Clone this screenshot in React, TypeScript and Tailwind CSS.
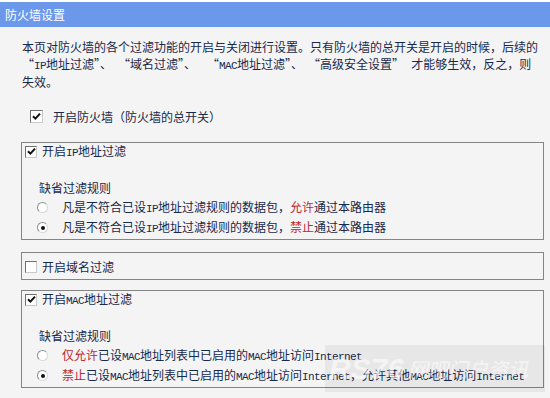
import React from 'react';

const cjk = "font-['SimSun','Noto_Sans_CJK_SC',sans-serif]";

// half-width latin runs, like the router's bitmap font
function En({ children }: { children: React.ReactNode }) {
  return <span className="font-['Liberation_Mono',monospace] text-[11px] tracking-[-0.6px]">{children}</span>;
}

function Red({ children }: { children: React.ReactNode }) {
  return <span className="text-[#c1272d]">{children}</span>;
}

function CheckBox({ checked, size = 'sm' }: { checked?: boolean; size?: 'sm' | 'md' }) {
  return (
    <span
      className={`inline-flex items-center justify-center shrink-0 bg-white border border-[#6f6f6f] border-r-[#c9c9c9] border-b-[#c9c9c9] ${
        size === 'md' ? 'w-[13px] h-[13px]' : 'w-[12px] h-[12px]'
      }`}
    >
      {checked && (
        <svg width="9" height="9" viewBox="0 0 9 9">
          <path d="M1 4.2 L3.4 6.6 L8 1.6" stroke="#111" strokeWidth="2" fill="none" />
        </svg>
      )}
    </span>
  );
}

function Radio({ checked }: { checked?: boolean }) {
  return (
    <span className="inline-flex items-center justify-center w-[11px] h-[11px] rounded-full bg-white border border-[#8d8d8d] border-r-[#d8d8d8] border-b-[#d8d8d8] shrink-0">
      {checked && <span className="w-[4px] h-[4px] rounded-full bg-[#111]" />}
    </span>
  );
}

function FilterBox({
  label,
  checked,
  rules,
}: {
  label: React.ReactNode;
  checked?: boolean;
  rules?: { text: React.ReactNode; on?: boolean }[];
}) {
  return (
    <div className={`w-[523px] border border-[#858585] ${rules ? 'pb-[1px]' : 'pt-[5px] pb-[2px]'}`}>
      <div className="h-[20px] flex items-center pl-[3px] gap-[5px] -mt-[1px]">
        <CheckBox checked={checked} />
        <span>{label}</span>
      </div>
      {rules && (
        <>
          <div className="h-[20px] mt-[16px] flex items-center pl-[17px]">缺省过滤规则</div>
          {rules.map((r, i) => (
            <div key={i} className="h-[20px] flex items-center pl-[15px] gap-[14px]">
              <Radio checked={r.on} />
              <span className="whitespace-nowrap">{r.text}</span>
            </div>
          ))}
        </>
      )}
    </div>
  );
}

export default function App() {
  return (
    <div lang="zh-CN" className={`relative w-[550px] h-[398px] overflow-hidden bg-[#f4f4f4] text-[12px] text-[#18294a] ${cjk}`}>
      <div className="h-[2px] bg-white" />
      {/* title bar */}
      <div className="h-[25px] bg-[#6b98eb] text-white flex items-center pl-[5px] text-[12px]">防火墙设置</div>

      <div className="pl-[21px]">
        <p className="pt-[12px] pl-[1px] leading-[16.5px] whitespace-nowrap">
          本页对防火墙的各个过滤功能的开启与关闭进行设置。只有防火墙的总开关是开启的时候，后续的
          <br />
          “<En>IP</En>地址过滤”、<span className="inline-block w-[6px]" />“域名过滤”、<span className="inline-block w-[11px]" />“<En>MAC</En>地址过滤”、<span className="inline-block w-[5px]" />“高级安全设置”<span className="inline-block w-[7px]" />才能够生效，反之，则
          <br />
          失效。
        </p>

        <div className="h-[20px] mt-[16px] flex items-center pl-[9px] gap-[10px]">
          <CheckBox checked size="md" />
          <span>开启防火墙（防火墙的总开关）</span>
        </div>

        <div className="mt-[15px]">
          <FilterBox
            checked
            label={<>开启<En>IP</En>地址过滤</>}
            rules={[
              { text: <>凡是不符合已设<En>IP</En>地址过滤规则的数据包，<Red>允许</Red>通过本路由器</> },
              { text: <>凡是不符合已设<En>IP</En>地址过滤规则的数据包，<Red>禁止</Red>通过本路由器</>, on: true },
            ]}
          />
        </div>

        <div className="mt-[12px]">
          <FilterBox label="开启域名过滤" />
        </div>

        <div className="mt-[10px]">
          <FilterBox
            checked
            label={<>开启<En>MAC</En>地址过滤</>}
            rules={[
              { text: <><Red>仅允许</Red>已设<En>MAC</En>地址列表中已启用的<En>MAC</En>地址访问<En>Internet</En></> },
              {
                text: <><Red>禁止</Red>已设<En>MAC</En>地址列表中已启用的<En>MAC</En>地址访问<En>Internet</En>，允许其他<En>MAC</En>地址访问<En>Internet</En></>,
                on: true,
              },
            ]}
          />
        </div>
      </div>

      {/* site watermark laid over the bottom right */}
      <div className="absolute left-[325px] top-[345px] w-[220px] h-[47px] bg-black/[0.05] flex items-center gap-[4px] pl-[4px] pointer-events-none">
        <span className="font-['Liberation_Sans',sans-serif] italic font-bold text-[30px] text-white/55 leading-none">RS76</span>
        <span className="italic text-[20px] text-white/55 leading-none">网吧门户资讯</span>
      </div>
    </div>
  );
}
